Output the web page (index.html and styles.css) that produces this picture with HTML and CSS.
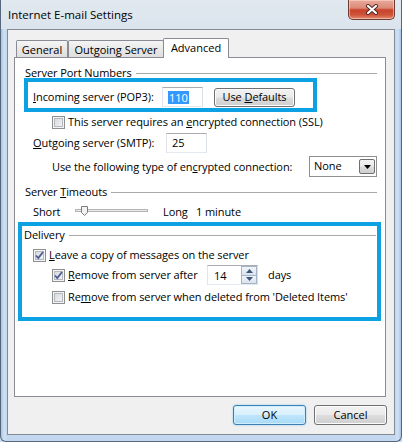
FILE: index.html
```html
<!DOCTYPE html>
<html>
<head>
<meta charset="utf-8">
<title>Internet E-mail Settings</title>
<link rel="stylesheet" href="styles.css">
</head>
<body>
<div class="window">
  <div class="titlebar">
    <span class="title">Internet E-mail Settings</span>
    <span class="close">
      <svg width="14" height="11" viewBox="0 0 14 11"><path d="M3 2 L11 9 M11 2 L3 9" stroke="#4a2620" stroke-width="4" stroke-linecap="round"/><path d="M3 2 L11 9 M11 2 L3 9" stroke="#ffffff" stroke-width="2.2" stroke-linecap="round"/></svg>
    </span>
  </div>
  <div class="client">
    <div class="tabs">
      <div class="tab tab-general">General</div>
      <div class="tab tab-out">Outgoing Server</div>
      <div class="tab tab-adv active">Advanced</div>
    </div>
    <div class="panel">
      <div class="group-head gh-port"><span>Server Port Numbers</span><i class="rule"></i></div>
      <div class="hl hl-port">
        <span class="lbl lbl-in"><u>I</u>ncoming server (POP3):</span>
        <span class="field f-in"><span class="sel">110</span></span>
        <span class="btn btn-def"><span>Use <u>D</u>efaults</span></span>
      </div>
      <div class="row row-ssl">
        <span class="cb"></span>
        <span class="cbtext">This server requires an <u>e</u>ncrypted connection (SSL)</span>
      </div>
      <div class="row row-smtp">
        <span class="lbl lbl-out"><u>O</u>utgoing server (SMTP):</span>
        <span class="field f-out">25</span>
      </div>
      <div class="row row-enc">
        <span>Use the following type of en<u>c</u>rypted connection:</span>
        <span class="combo"><span class="combo-text">None</span><span class="combo-btn"><svg width="7" height="4" viewBox="0 0 7 4"><path d="M0 0 H7 L3.5 4 Z" fill="#000"/></svg></span></span>
      </div>
      <div class="group-head gh-time"><span>Server <u>T</u>imeouts</span><i class="rule"></i></div>
      <div class="row row-slider">
        <span class="lbl lbl-short">Short</span>
        <svg class="slider" width="74" height="16" viewBox="0 0 74 16"><rect x="0.5" y="5.5" width="72" height="2" fill="#e9ebeb" stroke="#b4b4b4"/><path d="M6.5 2.5 H12.5 V8.5 L9.5 11.5 L6.5 8.5 Z" fill="#f2f2f2" stroke="#7c7c7c"/></svg>
        <span class="lbl lbl-long">Long</span>
        <span>1 minute</span>
      </div>
      <div class="hl hl-del">
        <div class="group-head gh-del"><span>Delivery</span><i class="rule"></i></div>
        <div class="row row-leave">
          <span class="cb"><svg width="9" height="9" viewBox="0 0 9 9"><path d="M1 4.5 L3.3 7 L8 1" fill="none" stroke="#4a5e94" stroke-width="1.8"/></svg></span>
          <span class="cbtext"><u>L</u>eave a copy of messages on the server</span>
        </div>
        <div class="row row-after">
          <span class="cb"><svg width="9" height="9" viewBox="0 0 9 9"><path d="M1 4.5 L3.3 7 L8 1" fill="none" stroke="#4a5e94" stroke-width="1.8"/></svg></span>
          <span class="cbtext after-text"><u>R</u>emove from server after</span>
          <span class="spin">
            <span class="spin-text">14</span>
            <span class="spin-btns">
              <span class="spin-btn"><svg width="7" height="4" viewBox="0 0 7 4"><path d="M0 4 H7 L3.5 0 Z" fill="#3f5478"/></svg></span>
              <span class="spin-btn"><svg width="7" height="4" viewBox="0 0 7 4"><path d="M0 0 H7 L3.5 4 Z" fill="#3f5478"/></svg></span>
            </span>
          </span>
          <span class="days">days</span>
        </div>
        <div class="row row-deleted">
          <span class="cb"></span>
          <span class="cbtext">Re<u>m</u>ove from server when deleted from 'Deleted Items'</span>
        </div>
      </div>
    </div>
    <div class="buttons">
      <span class="btn btn-ok">OK</span>
      <span class="btn btn-cancel">Cancel</span>
    </div>
  </div>
</div>
</body>
</html>
```
FILE: styles.css
```css
html, body {
  margin: 0;
  padding: 0;
  background: #c8dbef;
}
body {
  font-family: "Open Sans", "Noto Sans", sans-serif;
  font-size: 11px;
  line-height: 14px;
  color: #000;
}
u { text-decoration: underline; text-underline-offset: 1px; }

.window {
  width: 402px;
  height: 442px;
  box-sizing: border-box;
  padding: 0 6px 6px 6px;
  border: 1px solid #56677c;
  border-top: none;
  border-radius: 0 0 6px 6px;
  display: flex;
  flex-direction: column;
  background:
    linear-gradient(#e1e8ef, #dbe4ed) 0 0 / 100% 29px no-repeat,
    linear-gradient(to right, #a6c3e2 0, #cfe1f4 3px, #c3d8ef 6px, #c3d8ef calc(100% - 6px), #cfe1f4 calc(100% - 3px), #a6c3e2 100%);
}

.titlebar {
  height: 29px;
  flex: 0 0 29px;
  display: flex;
  align-items: flex-start;
}
.title {
  margin-left: 1px;
  margin-top: 7px;
  font-size: 11.5px;
  line-height: 16px;
  color: #000;
}
.close {
  margin-left: auto;
  width: 47px;
  height: 20px;
  box-sizing: border-box;
  border: 1px solid #6f3a32;
  border-top: none;
  border-radius: 0 0 5px 5px;
  background: linear-gradient(#e9aa9d 0%, #dc8a78 42%, #c8432c 52%, #cf5239 78%, #e08c70 100%);
  box-shadow: inset 0 0 0 1px rgba(255,220,210,0.55);
  display: flex;
  align-items: center;
  justify-content: center;
}

.client {
  flex: 1;
  border: 1px solid #838b94;
  background: #f0f0f0;
  padding: 8px 8px 0 6px;
  display: flex;
  flex-direction: column;
}

.tabs {
  height: 20px;
  flex: 0 0 20px;
  display: flex;
  align-items: flex-end;
  padding-left: 2px;
}
.tab {
  height: 18px;
  box-sizing: border-box;
  border: 1px solid #898c95;
  border-bottom: none;
  border-radius: 2px 2px 0 0;
  background: linear-gradient(#f5f5f5, #e6e6e6 55%, #dedede);
  text-align: center;
  line-height: 17px;
}
.tab-general { width: 52px; }
.tab-out { width: 96px; }
.tab-adv {
  width: 66px;
  height: 20px;
  margin-left: -1px;
  line-height: 17px;
  background: #ffffff;
  position: relative;
  z-index: 1;
}

.panel {
  height: 340px;
  flex: 0 0 340px;
  box-sizing: border-box;
  margin-top: -1px;
  border: 1px solid #898c95;
  background: #ffffff;
  display: flex;
  flex-direction: column;
  letter-spacing: -0.08px;
}

.group-head {
  height: 14px;
  display: flex;
  align-items: center;
  gap: 4px;
}
.group-head .rule {
  flex: 1;
  height: 0;
  border-top: 1px solid #a9a9a9;
  margin-top: 1px;
}
.gh-port { margin: 8px 8px 0 10px; }
.gh-time { margin: 8px 8px 0 10px; }

.hl {
  box-sizing: border-box;
  border: 4px solid #0ca1e2;
}
.hl-port {
  margin: -2px 0 0 9px;
  width: 293px;
  height: 34px;
  padding: 5px 0 1px 5px;
  display: flex;
  align-items: center;
}
.lbl { display: inline-block; white-space: nowrap; }
.lbl-in { width: 129px; }

.field {
  box-sizing: border-box;
  width: 41px;
  height: 20px;
  background: #fff;
  border: 1px solid;
  border-color: #abadb3 #dbdfe6 #e3e9ef #e2e3ea;
  padding-left: 5px;
  display: flex;
  align-items: center;
}
.sel {
  background: #3399ff;
  color: #fff;
  padding: 0 1px;
  line-height: 13px;
}

.btn {
  box-sizing: border-box;
  display: flex;
  align-items: center;
  justify-content: center;
  white-space: nowrap;
  border: 1px solid #707070;
  border-radius: 3px;
  background: linear-gradient(#f2f2f2 0%, #ebebeb 48%, #dddddd 52%, #cfcfcf 100%);
  box-shadow: inset 0 0 0 1px #fcfcfc;
}
.btn-def {
  width: 81px;
  height: 19px;
  margin-left: 11px;
}

.row {
  display: flex;
  align-items: center;
  white-space: nowrap;
}
.cb {
  width: 13px;
  height: 13px;
  flex: 0 0 13px;
  box-sizing: border-box;
  border: 1px solid #8e8f8f;
  background: linear-gradient(135deg, #d2d5da, #f8f8f8);
  box-shadow: inset 0 0 0 1px #f4f4f4, inset 0 0 0 2px #b5b9bf;
  display: flex;
  align-items: center;
  justify-content: center;
}
.cbtext { margin-left: 3px; }

.row-ssl { margin: 2px 0 0 37px; height: 16px; }
.row-smtp { margin: 3px 0 0 18px; height: 20px; }
.lbl-out { width: 133px; }
.row-enc { margin: 3px 8px 0 37px; height: 21px; }

.combo {
  margin-left: auto;
  width: 68px;
  height: 21px;
  box-sizing: border-box;
  border: 1px solid #8e8f8f;
  background: #fff;
  display: flex;
  align-items: center;
  padding: 0 1px 0 4px;
}
.combo-text { flex: 1; margin-top: -2px; }
.combo-btn {
  width: 16px;
  height: 15px;
  box-sizing: border-box;
  border: 1px solid #707070;
  border-radius: 2px;
  background: linear-gradient(#f2f2f2 0%, #ebebeb 48%, #dddddd 52%, #cfcfcf 100%);
  display: flex;
  align-items: center;
  justify-content: center;
}

.row-slider { margin: 5px 0 0 18px; height: 16px; }
.lbl-short { width: 42px; }
.slider { flex: 0 0 74px; margin-right: 14px; }
.lbl-long { width: 33px; }

.hl-del {
  margin: 2px 0 0 3px;
  width: 363px;
  height: 99px;
  padding: 2px 1px 0 2px;
  display: flex;
  flex-direction: column;
}
.gh-del { margin: 0; }
.row-leave { margin: 5px 0 0 9px; height: 16px; }
.row-after { margin: 2px 0 0 28px; height: 20px; }
.after-text { width: 139px; }
.spin {
  width: 51px;
  height: 20px;
  box-sizing: border-box;
  border: 1px solid;
  border-color: #abadb3 #dbdfe6 #e3e9ef #e2e3ea;
  background: #fff;
  display: flex;
  align-items: center;
  padding-left: 6px;
}
.spin-text { flex: 1; margin-top: 2px; }
.spin-btns {
  width: 16px;
  height: 18px;
  display: flex;
  flex-direction: column;
}
.spin-btn {
  flex: 1;
  box-sizing: border-box;
  border: 1px solid #a7b4c6;
  background: linear-gradient(#f0f5fb, #d9e3ee);
  display: flex;
  align-items: center;
  justify-content: center;
}
.spin-btn + .spin-btn { border-top: none; }
.days { margin-left: 10px; margin-top: -1px; }
.row-deleted { margin: 4px 0 0 28px; height: 16px; }

.buttons {
  margin: 8px -1px 0 0;
  display: flex;
  justify-content: flex-end;
  gap: 8px;
}
.buttons .btn {
  width: 73px;
  height: 20px;
}
.btn-ok {
  border-color: #3c7fb1;
  background: linear-gradient(#eaf6fd 0%, #d9f0fc 48%, #bee6fd 52%, #a7d9f5 100%);
  box-shadow: inset 0 0 0 1px #cfeefd, 0 0 2px #7fc0e8;
}
```
